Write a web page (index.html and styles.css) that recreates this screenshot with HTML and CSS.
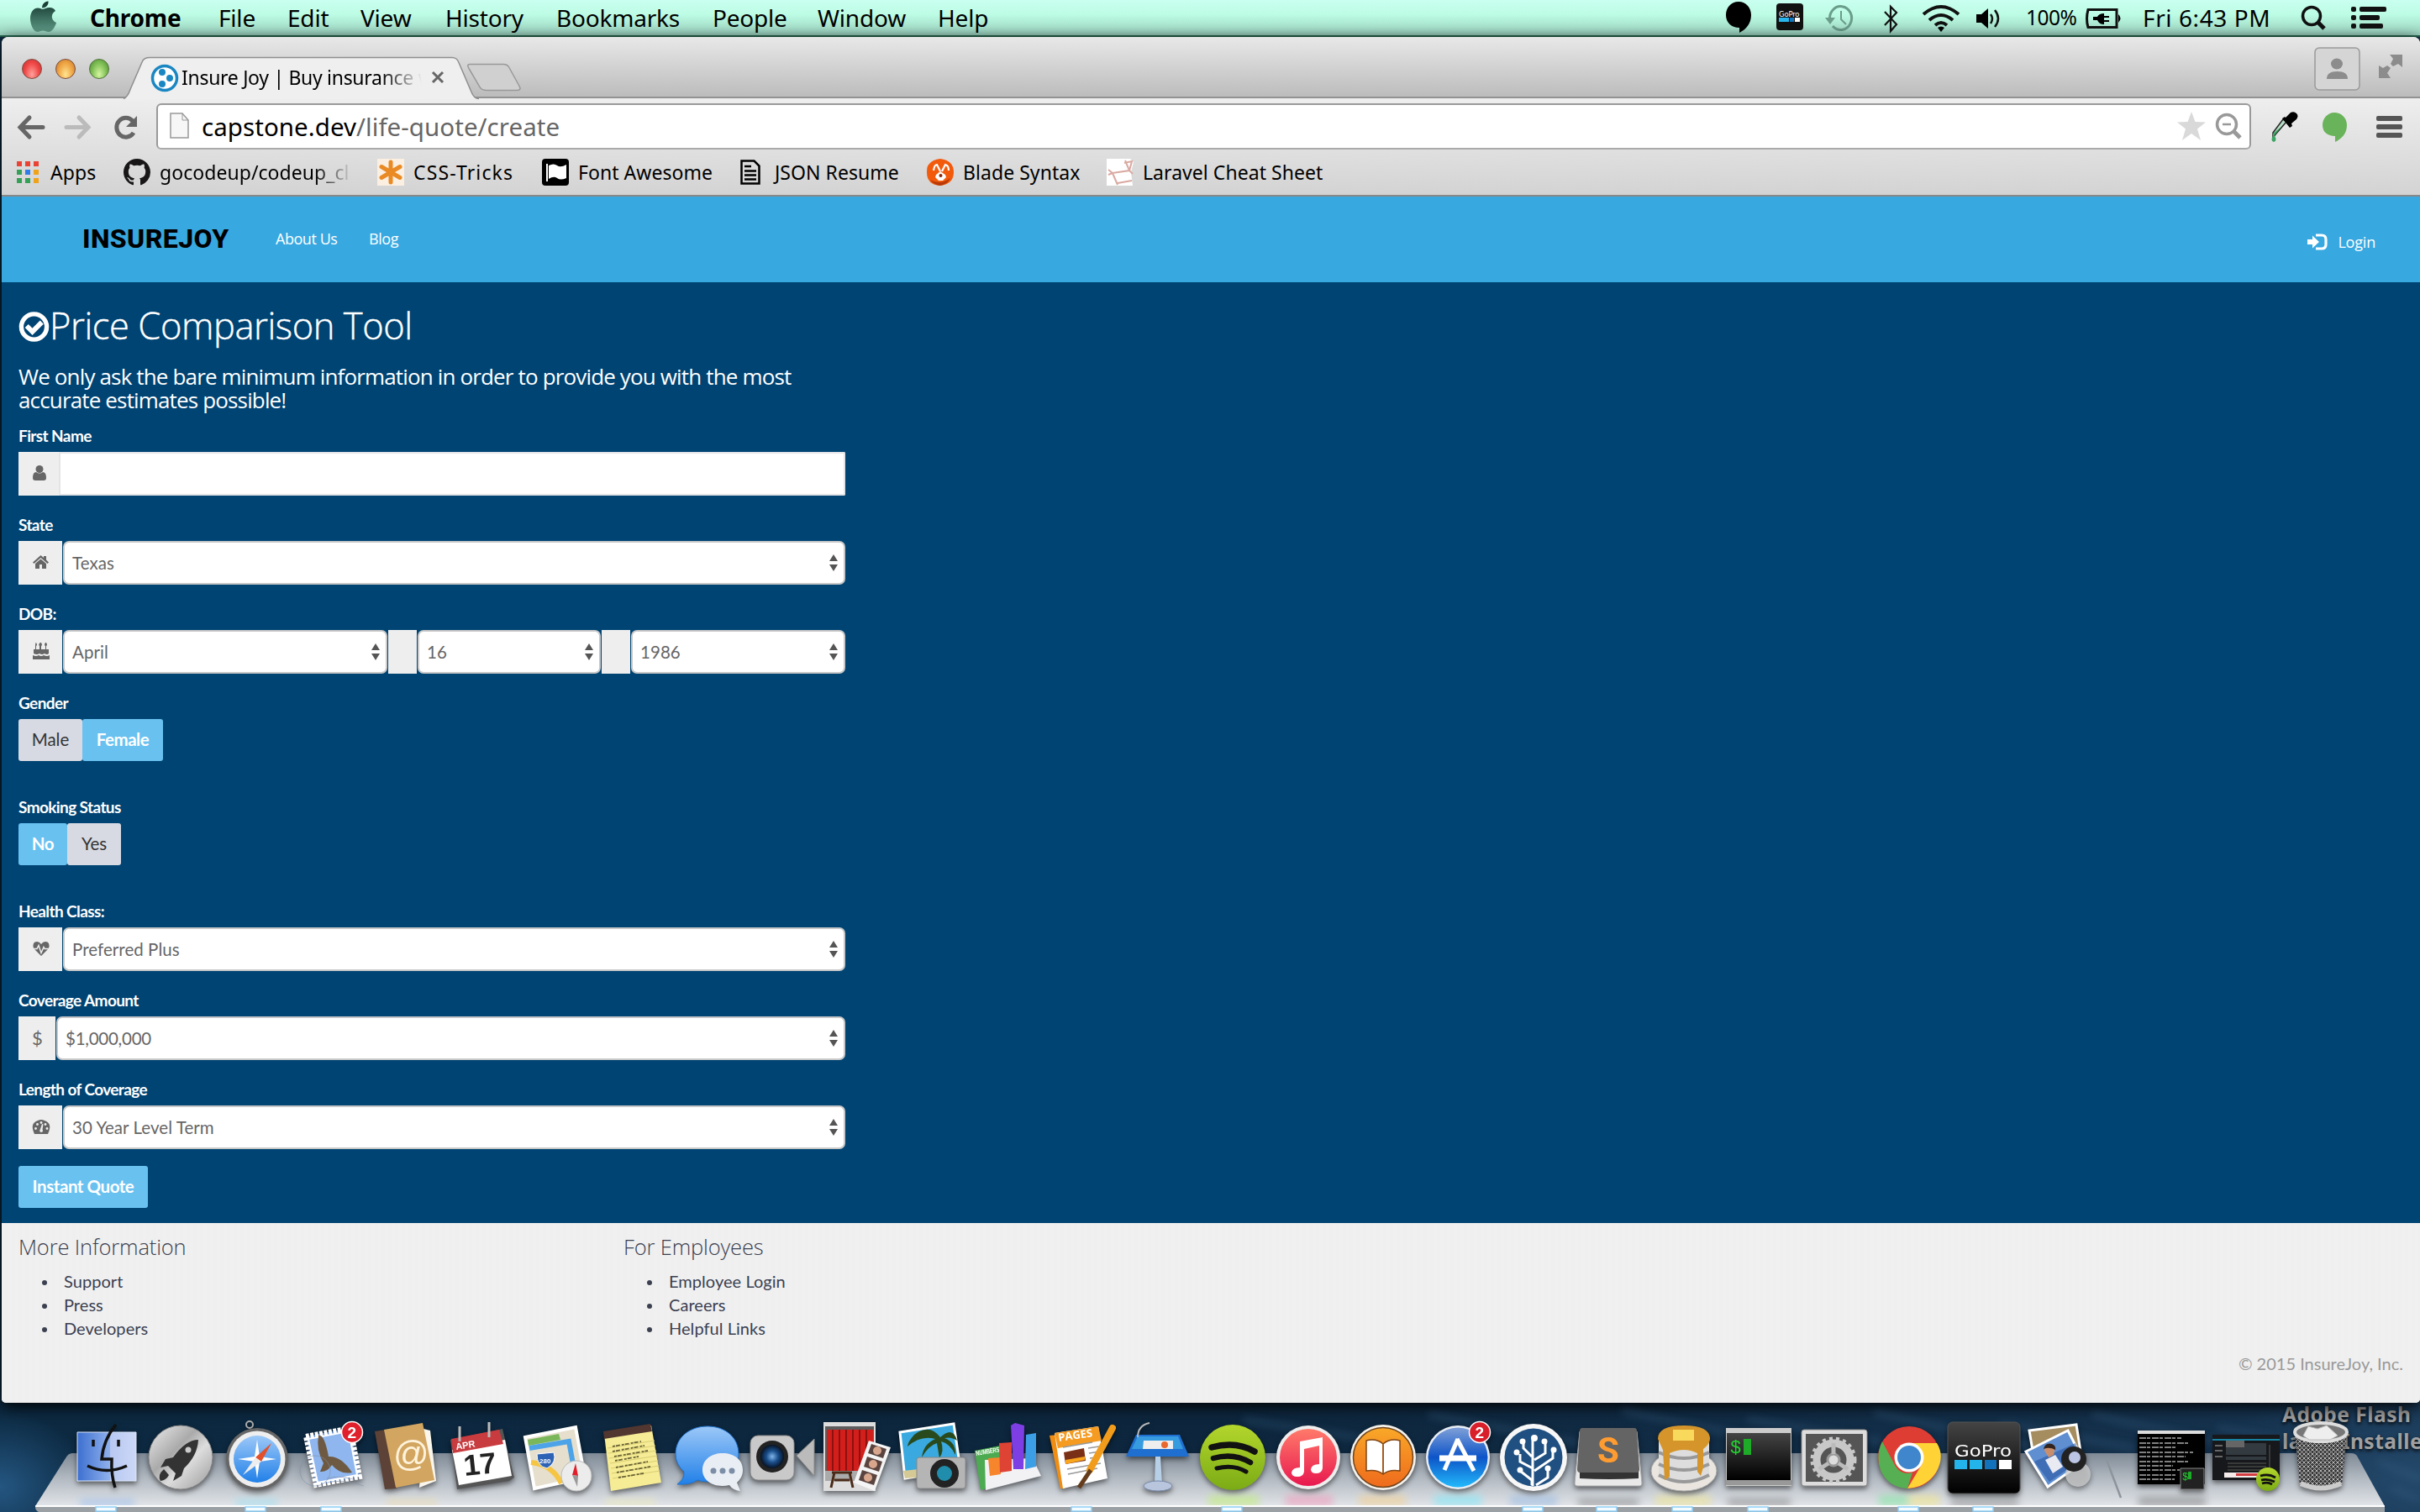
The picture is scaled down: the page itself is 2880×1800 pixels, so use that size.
FILE: index.html
```html
<!DOCTYPE html>
<html lang="en">
<head>
<meta charset="utf-8">
<title>Insure Joy | Buy insurance</title>
<link rel="stylesheet" href="styles.css">
</head>
<body>
<div class="desktop">
  <div class="desktop-label">Adobe Flash<br>layer Installer</div>

  <header class="menubar">
    <svg class="apple" viewBox="0 0 36 44" width="36" height="44"><defs><linearGradient id="ap" x2="0" y2="1"><stop offset="0" stop-color="#12352b"/><stop offset="1" stop-color="#5f9c88"/></linearGradient></defs><path fill="url(#ap)" d="M18 11c2-.2 4-2 8-2 3 0 6 1.600 7 4-6 3.500-5.500 11 1 14-1.500 5-5 11-9 11-3 0-4-1.500-7-1.500S14 38 11.500 38C7 38 3 29 3 22c0-8 4.500-12.500 9-12.500 3 0 4.500 1.500 6 1.500zM17 9.500C17 5 20 2 24.500 1.500 25 6 21.500 9.500 17 9.500z"/></svg>
    <b>Chrome</b><span>File</span><span>Edit</span><span>View</span><span>History</span><span>Bookmarks</span><span>People</span><span>Window</span><span>Help</span>
    <svg class="status" viewBox="2040 0 372 44" width="372" height="44">
      <path d="M2069 2c9 0 15 7 15 16 0 10-6 17-14 21v-6c-9 0-16-6-16-15s6-16 15-16z"/>
      <rect x="2114" y="4" width="32" height="32" rx="4" fill="#111"/><text x="2117" y="20" class="gopro-mini">GoPro</text><path fill="#29b6ef" d="M2117 21h12v5h-12z"/><path fill="#1477bd" d="M2130 21h5v5h-5z"/><path fill="#fff" d="M2136 21h6v5h-6z"/>
      <g fill="none" stroke="#6b9d8b" stroke-width="3"><path d="M2178 25a13 14 0 1 1 3 6"/><path d="M2191 13v10l6 6" stroke-width="2"/></g><path fill="#6b9d8b" d="M2172 21h12l-6 8z"/>
      <path fill="none" stroke="#111" stroke-width="2.200" d="M2243 14l14 15-7 8V8l7 7-14 15"/>
      <g fill="none" stroke="#111" stroke-width="4"><path d="M2289 17q21-18 42 0"/><path d="M2296 24q14-12 28 0"/><path d="M2303 30q7-6 14 0"/></g><path d="M2306 33q4-3 8 0l-4 5z"/>
      <path d="M2352 17h6l8-7v24l-8-7h-6z"/><path fill="none" stroke="#111" stroke-width="2.500" d="M2369 17q4 5 0 11M2374 12q8 10 0 20"/>
    </svg>
    <span class="percent">100%</span>
    <svg class="battery" viewBox="0 0 44 44" width="44" height="44"><path fill="none" stroke="#111" stroke-width="3" d="M4 11.500h34v21H4q-3-10 0-21z"/><path d="M40 17q5 4.500 0 10zM10 20h5q2-4 8-4v3h6v2h-6v3h6v2h-6v3q-6 0-8-5h-5z"/></svg>
    <span class="clock">Fri 6:43 PM</span>
    <svg viewBox="2730 0 120 44" width="120" height="44"><circle cx="2751" cy="19" r="10.500" fill="none" stroke="#111" stroke-width="3.500"/><path stroke="#111" stroke-width="5" d="M2758 26l8 8"/><g fill="#111"><rect x="2798" y="8" width="6" height="6" rx="2"/><rect x="2808" y="8" width="32" height="6" rx="2"/><rect x="2798" y="18" width="6" height="6" rx="2"/><rect x="2808" y="18" width="24" height="6" rx="2"/><rect x="2798" y="28" width="6" height="6" rx="2"/><rect x="2808" y="28" width="28" height="6" rx="2"/></g></svg>
  </header>

  <section class="window">
    <div class="tabstrip">
      <div class="lights"><i class="red"></i><i class="amber"></i><i class="green"></i></div>
      <div class="tab">
        <svg class="tab-shape" viewBox="0 0 484 50" width="484" height="50"><path fill="#efefef" stroke="#8e8e8e" stroke-width="1.500" d="M0 49.500q5-2 8-11L22 6q2-5.500 9-5.500h360q6 0 8 6l15 35q3 8 9 8"/><path fill="#d0d0d0" stroke="#999" stroke-width="1.500" d="M412 8.500h40q5 0 7 4l12 22q3 5-3 5h-36q-6 0-8-4l-13-22q-3-5 1-5z"/></svg>
        <svg class="favicon" viewBox="0 0 34 34" width="34" height="34"><circle cx="17" cy="17" r="14.500" fill="#fff" stroke="#1a87c2" stroke-width="3.500"/><g fill="#1a87c2"><circle cx="14" cy="10" r="4"/><circle cx="23" cy="17" r="4"/><circle cx="14" cy="24" r="4"/></g></svg>
        <span class="tab-title">Insure Joy | Buy insurance w</span>
        <svg class="tab-close" viewBox="0 0 16 16" width="16" height="16"><path stroke="#666" stroke-width="3" d="M2 2l12 12M14 2L2 14"/></svg>
      </div>
      <svg class="strip-icons" viewBox="2750 44 120 72" width="120" height="72"><rect x="2756" y="57" width="53" height="50" rx="5" fill="#d5d5d5" stroke="#999" stroke-width="1.500"/><ellipse cx="2782" cy="76" rx="7" ry="6.500" fill="#8c8c8c"/><path fill="#8c8c8c" d="M2770 94q0-9 12.500-9t12.500 9zM2845 65h15v15l-5-4-6 3-3-3 3-6zM2832 78l5 3 5-3 4 3-4 6 4 6h-14z"/></svg>
    </div>

    <div class="toolbar">
      <svg viewBox="0 117 185 64" width="185" height="64" fill="none" stroke-width="5"><path stroke="#666" stroke-linecap="round" d="M24 151.500h27M35 140l-11 11.500L35 163"/><path stroke="#bbb" stroke-linecap="round" d="M79 151.500h26M94 140l11 11.500L94 163"/><path stroke="#666" stroke-width="5" d="M159 158a11 11.500 0 1 1-1-14"/><path fill="#666" d="M163 138v13h-13z"/></svg>
      <div class="omnibox">
        <svg viewBox="0 0 24 32" width="24" height="32"><path fill="#f7f7f7" stroke="#999" stroke-width="1.500" d="M1 1h14l7 8v21H1z"/><path fill="none" stroke="#999" d="M15 1v8h7"/></svg>
        <span class="url">capstone.dev<em>/life-quote/create</em></span>
        <svg viewBox="2590 124 84 54" width="84" height="54"><path fill="#d9d9d9" d="M2609 134l4.500 12 12.500.5-10 8 4 13.500-11-8-11 8 4-13.500-10-8 12.500-.5z"/><circle cx="2651" cy="149" r="11.500" fill="none" stroke="#999" stroke-width="3.500"/><path stroke="#999" stroke-width="2.500" d="M2646 149h10"/><path stroke="#999" stroke-width="5" d="M2659 157l8 8"/></svg>
      </div>
      <svg viewBox="2690 117 180 64" width="180" height="64"><path fill="#b7dcc4" stroke="#222" stroke-width="1.500" d="M2722 145l-13 15-3 4 0-6 12-16z"/><path fill="#3ca563" d="M2716 151l-8 10-2 4v-6zM2707 160q5 8 0 9-5-1 0-9z"/><path d="M2717 141l3-2 1 1 6-6q4-2 7 1t0 7l-6 5 1 3-3 2z"/><path fill="#69b35a" d="M2779 134c8 0 15 6 15 15 0 10-6 16-14 20v-7c-9 0-15-5-15-13s6-15 14-15z"/><g fill="#555"><rect x="2829" y="138" width="31" height="6" rx="2"/><rect x="2829" y="148" width="31" height="6" rx="2"/><rect x="2829" y="158" width="31" height="6" rx="2"/></g></svg>
    </div>

    <nav class="bookmarks">
      <a class="apps"><svg viewBox="0 0 26 26" width="26" height="26"><path fill="#ea4335" d="M0 0h6v6H0zM10 0h6v6h-6zM20 0h6v6h-6z"/><path fill="#34a058" d="M0 10h6v6H0zM0 20h6v6H0zM10 20h6v6h-6z"/><path fill="#2f7de9" d="M10 10h6v6h-6z"/><path fill="#f0a21b" d="M20 10h6v6h-6zM20 20h6v6h-6z"/></svg>Apps</a>
      <a><svg viewBox="0 0 16 16" width="32" height="32"><path fill="#181616" d="M8 0C3.580 0 0 3.580 0 8c0 3.540 2.290 6.530 5.470 7.590.4.070.55-.17.55-.38 0-.19-.01-.82-.01-1.490-2.010.37-2.530-.49-2.690-.94-.09-.23-.48-.94-.82-1.130-.28-.15-.68-.52-.01-.53.63-.01 1.080.58 1.230.82.720 1.210 1.870.87 2.330.66.070-.52.28-.87.51-1.070-1.780-.2-3.640-.89-3.640-3.950 0-.87.31-1.590.82-2.150-.08-.2-.36-1.020.08-2.120 0 0 .67-.21 2.200.82.640-.18 1.320-.27 2-.27s1.360.09 2 .27c1.530-1.040 2.200-.82 2.200-.82.440 1.100.160 1.920.080 2.120.51.560.82 1.270.82 2.150 0 3.070-1.870 3.750-3.650 3.950.29.250.54.730.54 1.480 0 1.070-.01 1.930-.01 2.200 0 .21.150.46.550.38A8.010 8.010 0 0 0 16 8c0-4.420-3.580-8-8-8z"/></svg><span class="faded">gocodeup/codeup_cl</span></a>
      <a class="tricks"><svg viewBox="0 0 32 32" width="32" height="32"><path fill="#fbefe2" d="M0 0h32v32H0z"/><path stroke="#e98a24" stroke-width="5" stroke-linecap="round" d="M16 4v24M5 9.500l22 13M27 9.500l-22 13"/></svg>CSS-Tricks</a>
      <a><svg viewBox="0 0 32 32" width="32" height="32"><rect width="32" height="32" rx="4"/><path fill="#fff" d="M8 8q6-3 10 0t11-1v16q-7 3-11 0t-10 1z"/><path stroke="#fff" stroke-width="2" d="M6 6v21"/></svg>Font Awesome</a>
      <a class="json"><svg viewBox="0 0 24 30" width="24" height="30"><path fill="none" stroke="#000" stroke-width="2.500" d="M1.500 1.500h15l6 6v21h-21zM5 8h8M5 13.500h14M5 18.500h14M5 23.500h14"/></svg>JSON Resume</a>
      <a><svg viewBox="0 0 32 32" width="32" height="32"><path fill="#f25a0c" d="M3 6q4-5 13-6 16 2 16 16T16 32Q0 31 0 16 0 8 3 6z"/><path fill="#b93a08" d="M4 25q12 7 24-2-4 8-12 9-8-1-12-7z"/><path fill="none" stroke="#fff" stroke-width="2.200" d="M8 14q1-7 4-7l4 8M18 15l4-8q4 1 4 7"/><path fill="#fff" d="M11 19l5-4 6 4 1 3-4 4h-5l-4-4z"/><circle cx="16.500" cy="20" r="2" fill="#8a2807"/></svg>Blade Syntax</a>
      <a><svg viewBox="0 0 32 32" width="32" height="32"><path fill="#fff" d="M0 0h28l4 4-3 12 2 16H0z"/><path fill="none" stroke="#d9a9a1" stroke-width="2" d="M2 13l5 4 20-3 3-11-9 2M7 17l6 14M2 19l5-2M13 29l17-3M22 2l5 12 4 4"/></svg>Laravel Cheat Sheet</a>
    </nav>

    <div class="site-nav">
      <span class="brand">INSUREJOY</span><a class="about">About Us</a><a>Blog</a>
      <a class="login"><svg viewBox="0 0 24 20" width="24" height="20"><path fill="none" stroke="#fff" stroke-width="3.200" d="M10 2h7q5 0 5 5v6q0 5-5 5h-7"/><path fill="#fff" d="M0 7h6V2.500L14 10l-8 7.500V13H0z"/></svg>Login</a>
    </div>

    <main class="quote">
      <h1><svg viewBox="0 0 38 38" width="37" height="38"><circle cx="19" cy="19" r="15.500" fill="none" stroke="#fff" stroke-width="5.500"/><path fill="none" stroke="#fff" stroke-width="6" d="M10 18l7 7 11.500-11.500"/></svg>Price Comparison Tool</h1>
      <p class="lead">We only ask the bare minimum information in order to provide you with the most<br>accurate estimates possible!</p>

      <div class="group"><label>First Name</label><div class="row"><span class="addon narrow"><svg viewBox="0 0 16 18" width="16" height="18"><circle cx="8" cy="4.500" r="4.500"/><path d="M0 15q0-7 4-7 4 3 8 0 4 0 4 7 0 3-3 3H3q-3 0-3-3z"/></svg></span><span class="input"></span></div></div>
      <div class="group"><label>State</label><div class="row"><span class="addon"><svg viewBox="0 0 19 16" width="19" height="16"><path d="M9.500 0L13 3V1h3v4.500l3 3-1.500 1.500-8-7-8 7L0 8.500zM3 10l6.500-5.500L16 10v6h-5v-5H8v5H3z"/></svg></span><span class="select">Texas</span></div></div>
      <div class="group"><label>DOB:</label><div class="row dob"><span class="addon"><svg viewBox="0 0 20 20" width="20" height="20"><path d="M3 3q0-3 1-3 2 3 0 4v4h4V4Q6 2 9 0h1q2 3 0 4v4h5V4q-2-1 0-4h1q2 3 0 4v4h3v5q-2 2-5 0-3 2-6 0-3 2-7 0V8h2zM0 15q4 2 7 0 3 2 6 0 4 2 7 0v5H0z"/></svg></span><span class="select">April</span><span class="addon"></span><span class="select">16</span><span class="addon"></span><span class="select">1986</span></div></div>
      <div class="group choice"><label>Gender</label><div class="buttons"><span class="btn male">Male</span><span class="btn active female">Female</span></div></div>
      <div class="group choice"><label>Smoking Status</label><div class="buttons"><span class="btn active no">No</span><span class="btn yes">Yes</span></div></div>
      <div class="group"><label>Health Class:</label><div class="row"><span class="addon"><svg viewBox="0 0 20 17" width="20" height="17"><path d="M10 17L1 8Q-1 0 5 0q3 0 5 3 2-3 5-3 6 0 4 8z"/><path fill="none" stroke="#eee" stroke-width="1.500" d="M0 8.500h5l2-4 3 9 3-7 1 2h6"/></svg></span><span class="select">Preferred Plus</span></div></div>
      <div class="group"><label>Coverage Amount</label><div class="row"><span class="addon dollar">$</span><span class="select amount">$1,000,000</span></div></div>
      <div class="group last"><label>Length of Coverage</label><div class="row"><span class="addon"><svg viewBox="0 0 20 17" width="20" height="17"><path d="M2 17Q-4 4 6 1q4-2 8 0 10 3 4 16z"/><g fill="#eee"><circle cx="3.500" cy="10.500" r="1.400"/><circle cx="5.500" cy="5.500" r="1.400"/><circle cx="10" cy="3.500" r="1.400"/><circle cx="15" cy="5.500" r="1.400"/><circle cx="17" cy="10.500" r="1.400"/><path d="M11 5l1.500.5-1 6q1.500 3-1.500 3.500-3-1-1-4z"/></g></svg></span><span class="select">30 Year Level Term</span></div></div>
      <span class="btn active submit">Instant Quote</span>
    </main>

    <footer class="site-footer">
      <div class="links"><h4>More Information</h4><ul><li>Support</li><li>Press</li><li>Developers</li></ul></div>
      <div class="links"><h4>For Employees</h4><ul><li>Employee Login</li><li>Careers</li><li>Helpful Links</li></ul></div>
      <span class="copyright">© 2015 InsureJoy, Inc.</span>
    </footer>
  </section>

  <div class="dock">
    <svg class="shelf" viewBox="0 1670 2880 130" width="2880" height="130">
      <defs>
        <linearGradient id="shelf" x2="0" y2="1"><stop offset="0" stop-color="#7f8a96"/><stop offset=".5" stop-color="#b4bbc3"/><stop offset="1" stop-color="#e2e5e9"/></linearGradient>
        <linearGradient id="steel" x2="1" y2="1"><stop offset="0" stop-color="#eee"/><stop offset=".4" stop-color="#aaa"/><stop offset=".6" stop-color="#ddd"/><stop offset="1" stop-color="#999"/></linearGradient>
        <linearGradient id="blue" x2="0" y2="1"><stop offset="0" stop-color="#9cc8f8"/><stop offset="1" stop-color="#2180e8"/></linearGradient>
        <linearGradient id="finder" x2="1" y2="0"><stop offset="0" stop-color="#3c6fd0"/><stop offset=".55" stop-color="#8fb0ec"/><stop offset=".56" stop-color="#b7c8f2"/><stop offset="1" stop-color="#cdd8f6"/></linearGradient>
        <linearGradient id="store" x2="0" y2="1"><stop offset="0" stop-color="#7fa0d8"/><stop offset=".5" stop-color="#0d54c8"/><stop offset="1" stop-color="#22b9fb"/></linearGradient>
        <linearGradient id="tunes" x2="0" y2="1"><stop offset="0" stop-color="#ff7a6a"/><stop offset="1" stop-color="#e8184f"/></linearGradient>
        <linearGradient id="dark" x2="0" y2="1"><stop offset="0" stop-color="#444"/><stop offset="1" stop-color="#000"/></linearGradient>
        <linearGradient id="orange" x2="0" y2="1"><stop offset="0" stop-color="#f9a828"/><stop offset="1" stop-color="#ef6a1c"/></linearGradient>
        <linearGradient id="spot" x2="0" y2="1"><stop offset="0" stop-color="#b3d62c"/><stop offset="1" stop-color="#7bab15"/></linearGradient>
        <radialGradient id="lens"><stop offset="0" stop-color="#7fb5e8"/><stop offset=".5" stop-color="#1a4f8c"/><stop offset="1" stop-color="#071325"/></radialGradient>
        <filter id="soft" x="-50%" y="-100%" width="200%" height="300%"><feGaussianBlur stdDeviation="5"/></filter>
      </defs>
      <g filter="url(#soft)" fill="none" stroke="#3a6286" stroke-width="5" opacity=".45"><path d="M1480 1690l150 24M1700 1684l180 34M1930 1680l200 40M2080 1690l160 26M2230 1682l190 40M2380 1694l160 30M2490 1684l180 40M2640 1700l120 22M2830 1740l50 20M2846 1772l34 14"/></g>
      <path fill="url(#shelf)" d="M86 1730h2712q6 0 8 5l32 58H42l36-57q3-6 8-6z"/>
      <g filter="url(#soft)" opacity=".55"><path fill="#89b4ee" d="M95 1785h65v8H95z"/><path fill="#8adff5" d="M280 1785h50v8h-50z"/><path fill="#efd9a0" d="M460 1785h60v8h-60z"/><path fill="#f4efb0" d="M720 1785h60v8h-60z"/><path fill="#bdf06a" d="M1438 1780h60v13h-60z"/><path fill="#f492b5" d="M1530 1780h56v13h-56z"/><path fill="#f7cf87" d="M1617 1780h56v13h-56z"/><path fill="#75eafc" d="M1707 1780h56v13h-56z"/><path fill="#94b8e3" d="M1797 1780h56v13h-56z"/><path fill="#777" d="M1878 1784h72v9h-72zM2056 1784h75v9h-75zM2322 1784h80v9h-80zM2545 1782h80v11h-80z"/><path fill="#f2e68a" d="M1970 1780h66v13h-66z"/><path fill="#78e69a" d="M2236 1780h36v13h-36z"/><path fill="#f7e87e" d="M2272 1780h36v13h-36z"/></g>
      <path fill="#9ba0a5" d="M42 1794h2796v6H46q-4-2-4-6z"/><path fill="#fff" d="M42 1792h2796v2H42z"/>
      <path stroke="#8d949b" stroke-width="2.500" d="M2507 1738l17 45"/>
      <g fill="#f4fcff" stroke="#8dcdf5" stroke-width="1.500"><path d="M114 1794h24v5h-24zM292 1794h24v5h-24zM382 1794h24v5h-24zM1275 1794h24v5h-24zM1454 1794h24v5h-24zM1812 1794h24v5h-24zM1900 1794h24v5h-24zM1990 1794h24v5h-24zM2080 1794h24v5h-24zM2259 1794h24v5h-24zM2348 1794h24v5h-24z"/></g>
    </svg>
    <div class="icons">
      <svg viewBox="-45 0 90 100"><path fill="url(#finder)" stroke="#dce7fb" d="M-35 9h70v58h-70z"/><path fill="none" stroke="#111" stroke-width="3.500" d="M11 0Q-4 18-6 41H6Q5 60 10 75M-23 49Q0 60 24 49M-16 18v8M14 18v8"/></svg>
      <svg viewBox="-45 0 90 100"><circle cx="-1" cy="39" r="38" fill="url(#steel)" stroke="#888"/><path fill="#333" d="M20 18Q5 18-10 39l-9 2-6 10 9-2 9 9-3 9 10-6 3-9Q19 37 20 18zM-21 53q-8 7-4 14 7-1 10-7z"/><circle cx="8" cy="30" r="3.500" fill="#ccc"/></svg>
      <svg viewBox="-45 0 90 100"><circle cx="-9" cy="0" r="4" fill="none" stroke="#aaa" stroke-width="2"/><circle cy="41" r="37" fill="#666"/><circle cy="41" r="33.500" fill="#eee"/><circle cy="41" r="28" fill="url(#blue)"/><path fill="#fff" d="M0 18l3 20 20 3-20 3-3 20-3-20-20-3 20-3z"/><path fill="#e2512b" d="M17 22L5 44l-7-5z"/><path fill="#eee" d="M-17 60L5 44l-7-5z"/></svg>
      <svg viewBox="-45 0 90 100"><path fill="#5682c8" stroke="#fff" stroke-width="6" stroke-dasharray="4 1.500" d="M-31 14L22 4l11 58-52 10z"/><path fill="#8fb6ee" stroke="#fff" stroke-width="2" d="M-28 17L20 8l10 52-47 9z"/><path fill="#6e5a42" d="M-16 13q7-2 12 25 15-1 28 19-14 3-24-9-6 9-14 8l4-10q-9-16-6-33z"/><circle cx="-20" cy="55" r="18" fill="none" stroke="#8090a8" opacity=".6"/><path fill="none" stroke="#8090a8" opacity=".6" d="M-6 64q18-5 40 4M-6 69q18-5 44 4"/><circle cx="24" cy="9" r="12.500" fill="#e0202c" stroke="#fff" stroke-width="1.500"/><text x="18.500" y="16" class="badge">2</text></svg>
      <svg viewBox="-45 0 90 100"><path fill="#faf6ec" d="M20 5l8 2 7 60-20 8z"/><path fill="#5c4237" d="M-38 8l12-2 14 70-14 1z"/><path fill="#d2a661" d="M-27 6L19-2 33 66l-46 9z"/><text x="-16" y="49" class="at">@</text></svg>
      <svg viewBox="-45 0 90 100"><path fill="#555" d="M-38 18L24 5l14 58-6 4-62 10z"/><path fill="#fff" d="M-36 30L27 18l8 43-63 11z"/><path fill="#c83b3f" d="M-37 17L20 6l5 17-60 11z"/><path stroke="#bbb" stroke-width="3" d="M-27 2v18M8-3v18"/><text x="-31" y="30" class="apr" transform="rotate(-9 -31 30)">APR</text><text x="-21" y="61" class="day" transform="rotate(-6 -21 61)">17</text></svg>
      <svg viewBox="-45 0 90 100"><path fill="#e6dfcd" stroke="#fff" stroke-width="4" d="M-38 15L22 3l11 60-60 13z"/><path fill="#79b75a" d="M-35 18L2 11l2 7-38 7z"/><path fill="none" stroke="#4da3e8" stroke-width="6" d="M-33 28L14 20l6 32"/><path fill="none" stroke="#f6c543" stroke-width="6" d="M-31 45q26 3 36 25"/><path fill="#2d62b5" stroke="#fff" d="M-24 35l20-2q4 12-8 19-12-2-12-17z"/><text x="-21" y="46" class="tiny">280</text><circle cx="23" cy="61" r="18" fill="#ececec" stroke="#bbb"/><path fill="#e01e2a" d="M22 46l-4 14 7 1z"/><path fill="#999" d="M24 74l-6-14 7 1z"/></svg>
      <svg viewBox="-45 0 90 100"><path fill="#f6ec95" d="M-34 11L22 1l12 68-60 10z"/><path fill="#523630" d="M-35 8L21-1l2 9-57 9z"/><path stroke="#d9cd73" fill="none" d="M-30 28l56-9M-29 34l56-9M-28 40l56-9M-27 46l56-9M-26 52l56-9M-25 58l56-9M-24 64l56-9"/><path stroke="#6a6436" stroke-width="1.800" stroke-dasharray="3 1 5 2" fill="none" d="M-24 26l34-6M-24 32l38-7M-22 38l40-7M-21 43l28-5M-20 51l38-7M-19 57l40-7M-17 63l30-5"/></svg>
      <svg viewBox="-45 0 90 100"><path fill="url(#blue)" stroke="#2173cf" d="M0 2c21 0 37 13 37 33S21 68 0 68q-6 0-12-2-8 6-24 5 9-6 8-15-10-9-10-21C-38 15-21 2 0 2z"/><path fill="#e9eef5" d="M18 34c14 0 24 8 24 20 0 7-3 11-7 15l4 10q-9-1-13-7C8 76-6 67-6 54c0-12 10-20 24-20z"/><g fill="#7b8ea5"><circle cx="7" cy="55" r="3.500"/><circle cx="18" cy="55" r="3.500"/><circle cx="29" cy="55" r="3.500"/></g></svg>
      <svg viewBox="-45 0 90 100"><rect x="-38" y="13" width="52" height="53" rx="9" fill="#c9c9c9" stroke="#888"/><circle cx="-12" cy="38" r="19" fill="#222"/><circle cx="-12" cy="38" r="14" fill="url(#lens)"/><path fill="#bbb" stroke="#888" d="M17 37l21-20v44z"/></svg>
      <svg viewBox="-45 0 90 100"><path fill="#ddd" d="M-41-3h62v82h-62z"/><path fill="#5c5c5c" d="M-39 2h58v56h-58z"/><path fill="#aaa" d="M-39 55h58v12h-58z"/><path fill="#d21f1c" d="M-37 6H18v49h-55z"/><path stroke="#8e100f" stroke-width="2" d="M-30 6v49M-22 6v49M-14 6v49M-6 6v49M2 6v49M10 6v49"/><path stroke="#4a2a17" stroke-width="3" fill="none" d="M-31 57h24M-28 57l-4 18M-10 57l4 18M-28 66h18"/><path fill="#f5f5f5" d="M13 19l26 8-19 52-25-10z"/><path fill="#5a443f" d="M16 23l18 6-4 11-18-6zM11 38l18 6-4 12-18-6zM5 54l18 6-4 12-18-6z"/><g fill="#d8a68d"><circle cx="23" cy="31" r="5"/><circle cx="18" cy="47" r="5"/><circle cx="12" cy="63" r="5"/></g></svg>
      <svg viewBox="-45 0 90 100"><path fill="#39a9df" stroke="#fff" stroke-width="3" d="M-39 9L25-1l8 54-66 11z"/><path fill="#d5c996" d="M-35 55l36-4v10l-34 3z"/><path fill="#294a1c" d="M9 15Q-4-2-22 12q-8 9-8 14Q-14 12 3 17q-14 6-16 22 8-14 18-17l3 18q6-9 2-20 10 2 17 16 1-15-13-20 8-2 15 3Q24 1 9 15z"/><rect x="-19" y="39" width="58" height="37" rx="3" fill="#b5b5b5" stroke="#888"/><circle cx="14" cy="58" r="17" fill="#222"/><circle cx="14" cy="58" r="9" fill="#208dac"/></svg>
      <svg viewBox="-45 0 90 100"><path fill="#4cab51" d="M-39 31l35-7 12 42-40 12z"/><path fill="#f2f2f5" d="M-27 42l57-2 10 21-66 17z"/><text x="-37" y="37" class="tiny" transform="rotate(-10 -37 37)" textLength="28" lengthAdjust="spacingAndGlyphs">NUMBERS</text><path fill="#f7852c" d="M-23 40l14-1 1 20-13 2z"/><path fill="#de4334" d="M-10 22l15-1v34l-14 2z"/><path fill="#7d3fe4" d="M4 1l5-3 11 3-1 52H7z"/><path fill="#3c9fe6" d="M22 12l12-2v40l-13 3z"/></svg>
      <svg viewBox="-45 0 90 100"><path fill="#f08e13" d="M-40 13l10-1 9 64h-6z"/><path fill="#fff" d="M-34 10L18 2l11 62-53 12z"/><path fill="#f59b22" d="M-34 10L18 2l4 17-52 9z"/><text x="-29" y="20" class="pages" transform="rotate(-8 -29 20)">PAGES</text><path fill="#7a3016" d="M-23 33l24-5 2 15-24 4z"/><path fill="#f9a51d" d="M-21 42l23-4v4l-23 5z"/><path stroke="#999" stroke-width="1.500" d="M-24 27l35-6M6 28l13-2M7 34l13-2M8 40l13-2M-19 53l40-7M-18 59l35-7"/><path stroke="#f29c1b" stroke-width="8" stroke-linecap="round" d="M35 4L8 54"/><path stroke="#643c1c" stroke-width="5" d="M9 54L-5 75"/></svg>
      <svg viewBox="-45 0 90 100"><path fill="#1f6fd0" d="M-26 12h52l11 26h-75z"/><path fill="#46b9e9" d="M-24 14h48l6 15h-61z" opacity=".6"/><path fill="#eee" d="M-17 19h35v10h-36z"/><circle cx="8" cy="24" r="4" fill="#e9682e"/><path fill="#b8cfe8" d="M-3 38h6l2 32h-9z"/><ellipse cy="73" rx="17" ry="6" fill="#b8c5dc" stroke="#7788a8"/><path fill="none" stroke="#bbb" stroke-width="2" d="M-24 15q0-14 14-17"/></svg>
      <svg viewBox="-45 0 90 100"><circle cy="39" r="39" fill="url(#spot)"/><g fill="none" stroke="#111" stroke-linecap="round"><path stroke-width="7.500" d="M-25 27q29-8 51 5"/><path stroke-width="6.500" d="M-23 40q24-7 44 5"/><path stroke-width="5" d="M-19 52q20-5 35 4"/></g></svg>
      <svg viewBox="-45 0 90 100"><circle cy="39" r="38" fill="#eee"/><circle cy="39" r="34" fill="url(#tunes)"/><path fill="#fff" d="M-10 20l27-5v37q-1 6-8 6-6 0-6-5 1-6 10-6V25l-18 4v27q-1 6-8 6-7 0-7-5 1-6 10-6z"/></svg>
      <svg viewBox="-45 0 90 100"><circle cy="39" r="39" fill="#f5f2ec"/><circle cy="39" r="35.500" fill="url(#orange)" stroke="#70451e" stroke-width="1.500"/><path fill="#fff" stroke="#834513" stroke-width="1.500" d="M-20 19q12-3 20 4 8-7 20-4v36q-13-2-20 4-7-6-20-4z"/><path stroke="#a35b20" d="M0 23v35" stroke-width="2"/></svg>
      <svg viewBox="-45 0 90 100"><circle cy="39" r="38" fill="#e9eef5"/><circle cy="39" r="35.500" fill="url(#store)"/><g fill="none" stroke="#fff"><path stroke-width="7" d="M-22 40h44"/><path stroke-width="5" d="M0 17l-16 37M-1 17l20 38"/></g><circle cx="26" cy="9" r="12.500" fill="#d81f2a" stroke="#fff" stroke-width="1.500"/><text x="20.500" y="16" class="badge">2</text></svg>
      <svg viewBox="-45 0 90 100"><circle cy="39" r="40" fill="#f7f7f7"/><circle cy="39" r="34.500" fill="#205081"/><g fill="none" stroke="#fff" stroke-width="3"><path d="M-1 73V18M-1 52l-15-8V35M-2 38l-10-10v-8M1 42l13-8V21M1 55l22-15V30M-2 72V66l-14-11M3 72l14-9v-9"/></g><g fill="#fff"><circle cx="1" cy="16" r="4"/><circle cx="-13" cy="20" r="3.500"/><circle cx="-20" cy="33" r="3.500"/><circle cx="13" cy="20" r="3.500"/><circle cx="24" cy="30" r="3.500"/><circle cx="-16" cy="54" r="3.500"/><circle cx="17" cy="52" r="3.500"/></g></svg>
      <svg viewBox="-45 0 90 100"><path fill="#e9e9e9" stroke="#aaa" d="M-34 8h68l6 62q0 3-3 3h-74q-3 0-3-3z"/><path fill="#333" d="M-34 54h70v10q-35 2-70 0z"/><path fill="#646464" d="M-31 4h62q3 0 3 4l3 45q0 4-3 4h-68q-3 0-3-4l3-45q0-4 3-4z"/><text x="-13" y="45" class="sublime">S</text></svg>
      <svg viewBox="-45 0 90 100"><ellipse cy="55" rx="39" ry="24" fill="#eae6df" stroke="#aaa"/><path fill="#ddd" d="M-30 15h60v46q-30 18-60 0z"/><path fill="none" stroke="#999" stroke-width="4" d="M-30 33q30 14 60 0M-30 47q30 14 60 0M-30 60q30 16 60 0"/><path fill="#d5952a" d="M-31 17q0-16 31-16t31 16q0 6-8 12v22l-3 10-4-5V34Q0 26-17 34v28l-6 4-2-36z"/><path fill="#f9d95c" d="M-13 6h25v13h-25z"/></svg>
      <svg viewBox="-45 0 90 100"><path fill="#ccc" d="M-39 4h78v69h-78z"/><path fill="url(#dark)" d="M-38 10h76v56h-76z"/><path fill="#999" d="M-39 66h78v6h-78z"/><text x="-34" y="34" class="term">$</text><path fill="#1eac28" d="M-18 17h9v19h-9z"/></svg>
      <svg viewBox="-45 0 90 100"><rect x="-38" y="6" width="78" height="67" rx="3" fill="#ddd" stroke="#888"/><path fill="#555" d="M-33 11h68v57h-68z"/><circle cy="42" r="20" fill="none" stroke="#c8c8c8" stroke-width="9"/><circle cy="42" r="25" fill="none" stroke="#c8c8c8" stroke-width="5" stroke-dasharray="4 4"/><circle cy="42" r="7" fill="#ddd" stroke="#999" stroke-width="3"/><path stroke="#bbb" stroke-width="5" d="M0 35V22M6 46l11 7M-6 46l-11 7"/></svg>
      <svg viewBox="-45 0 90 100"><circle cy="39" r="37" fill="#de3d34"/><path fill="#ffd335" d="M0 22h33Q43 38 32 57 20 75-2 76l18-30z"/><path fill="#56b053" d="M-32 20l16 30q8 11 20 7l-6 19q-23-1-32-22-6-17 2-34z"/><circle cy="39" r="17.500" fill="#fff"/><circle cy="39" r="14" fill="#3f86cc"/></svg>
      <svg viewBox="-45 0 90 100"><rect x="-43" y="-3" width="86" height="85" rx="6" fill="url(#dark)" stroke="#555"/><text x="-35" y="38" class="gopro" textLength="68" lengthAdjust="spacingAndGlyphs">GoPro</text><path fill="#24b4ec" d="M-35 42h15v11h-15zM-17 42H-2v11h-15z"/><path fill="#1272bc" d="M1 42h14v11H1z"/><path fill="#fff" d="M18 42h15v11H18z"/></svg>
      <svg viewBox="-45 0 90 100"><path fill="#a58d60" stroke="#fff" stroke-width="3" d="M-35 7L21 0l6 38-55 11z"/><path fill="#5f8fd0" stroke="#fff" stroke-width="3" d="M-39 32L11 7l19 37-43 30z"/><path fill="#2c58a5" d="M-29 44L20 22l7 20-38 26z" opacity=".6"/><path fill="#c98f6d" d="M-17 31q0-8 8-7 6 3 3 12l-6 3z"/><path fill="#e9eaf2" d="M-16 42l12-6 9 14-12 8z"/><path fill="#33231d" d="M-18 29q2-8 10-6 5 2 4 7-7-4-14-1z"/><circle cx="23" cy="59" r="15" fill="#ccc" opacity=".8"/><circle cx="18" cy="41" r="15" fill="#222"/><circle cx="19" cy="39" r="7" fill="#bcc5e3"/></svg>
    </div>
    <div class="icons minimized">
      <svg viewBox="-45 0 90 100"><path d="M-40 7h80v64h-80z"/><path fill="#ddd" d="M-40 7h80v4h-80z"/><path stroke="#aaa" stroke-width="1.500" stroke-dasharray="8 1 4 2" d="M-38 16h50M-38 22h58M-38 27h45M-38 33h64M-38 38h55M-38 44h60M-38 49h40M-38 54h48M-38 60h45M-38 65h42"/><path fill="#222" stroke="#888" d="M11 52h28v25H11z"/><text x="13" y="66" class="term-mini">$</text><path fill="#1eac28" d="M20 56h4v9h-4z"/></svg>
      <svg viewBox="-45 0 90 100"><path fill="#16181b" d="M-40 12h80v54h-80z"/><path fill="#1683a3" d="M-40 17h80v2h-80z"/><path fill="#333a40" d="M-24 22h48v14h-48zM-24 38h48v4h-48z"/><path fill="#666" d="M-24 19h22v8h-22zM-37 24h9v2h-9zM-37 30h9v2h-9zM-37 37h9v2h-9z"/><path stroke="#444" stroke-width="1.500" d="M-22 46h46M-22 50h46M-22 54h46M28 24v36"/><path fill="#f4eaea" d="M-26 57h50v6h-50z"/><path fill="#d43b40" d="M-12 58h28v3h-28z"/><circle cx="26" cy="65" r="14" fill="url(#spot)"/><path fill="none" stroke="#111" stroke-width="2.800" d="M17 61q10-3 18 2M18 66q8-2 16 2M19 70q7-2 12 1"/></svg>
      <svg viewBox="-45 0 90 100"><defs><pattern id="mesh" width="5" height="5" patternUnits="userSpaceOnUse"><path fill="#3a3a3a" d="M0 0h5v5H0z"/><path stroke="#b5b5b5" d="M0 0l5 5M5 0L0 5"/></pattern></defs><path fill="url(#mesh)" d="M-31 8q31 22 62 0l-6 64q-25 10-50 0z"/><ellipse cx="0" cy="9" rx="31" ry="11" fill="#777" stroke="#ddd" stroke-width="4"/><path fill="#eee" stroke="#bbb" d="M-21 13l6-11 11 3 11-4 13 12-9 5h-25z"/><path fill="none" stroke="#ccc" stroke-width="6" d="M-24 70q24 11 48 0"/></svg>
    </div>
  </div>
</div>
</body>
</html>
```
FILE: styles.css
```css
* { box-sizing: border-box; }
body { margin: 0; width: 2880px; height: 1800px; overflow: hidden; font-family: "Noto Sans", "Open Sans", sans-serif; }
svg { display: block; flex: none; overflow: visible; }

.desktop { position: relative; width: 2880px; height: 1800px; overflow: hidden; display: flex; flex-direction: column; background: radial-gradient(ellipse 110px 90px at 0 1770px, #245681, transparent), radial-gradient(ellipse 260px 120px at 2880px 1760px, #24496b, transparent), linear-gradient(90deg, #0c2941 0, #0d263d 50%, #16334f 100%); }
.desktop-label { position: absolute; left: 2716px; top: 1668px; font-size: 24.500px; line-height: 32px; font-weight: 700; letter-spacing: .5px; color: #a0a0a0; white-space: nowrap; text-shadow: 0 2px 4px #000; z-index: 0; }

.menubar { height: 44px; flex: none; display: grid; grid-template-columns: 75px 153px 82px 87px 101px 132px 186px 125px 143px 923px 372px 69px 70px 179px 120px; padding-left: 33px; font-size: 28px; letter-spacing: -.2px; line-height: 42px; white-space: nowrap; color: #000; border-bottom: 2px solid #23674f; background: linear-gradient(#c9fff0, #bdfce5 40%, #9bd3bf); }
.menubar > b, .menubar > span { margin-left: -1px; }
.percent { font-size: 24.500px; letter-spacing: -.5px; }
.clock { letter-spacing: .6px; }

.window { position: relative; z-index: 1; margin-left: 2px; height: 1626px; flex: none; display: flex; flex-direction: column; border-radius: 8px 8px 5px 5px; overflow: hidden; box-shadow: 0 4px 18px #000; background: #efefef; }
.tabstrip { height: 73px; flex: none; display: flex; align-items: flex-start; background: linear-gradient(#e8e8e8, #bcbcbc); border-bottom: 2px solid #929292; }
.lights { display: flex; gap: 16px; padding: 26px 0 0 24px; width: 145px; }
.lights i { width: 24px; height: 24px; border-radius: 50%; border: 1.500px solid #7b4b3f; }
.lights .red { background: radial-gradient(ellipse at 50% 80%, #ffa29c, #ef4746 55%, #c22d30); }
.lights .amber { background: radial-gradient(ellipse at 50% 80%, #ffe490, #efa443 55%, #bd7427); }
.lights .green { background: radial-gradient(ellipse at 50% 80%, #d5f6a0, #7fbf55 55%, #4b8533); border-color: #4d7338; }
.tab { position: relative; width: 484px; height: 50px; margin-top: 24px; display: flex; align-items: center; }
.tab-shape { position: absolute; left: 0; top: 0; }
.favicon { position: relative; margin-left: 32px; }
.tab-title { position: relative; margin: -3px 0 0 3px; width: 289px; overflow: hidden; white-space: nowrap; font-size: 23px; letter-spacing: -.3px; color: #000; -webkit-mask-image: linear-gradient(90deg, #000 82%, transparent 99%); mask-image: linear-gradient(90deg, #000 82%, transparent 99%); }
.tab-close { position: relative; margin: -2px 0 0 8px; }
.strip-icons { margin-left: auto; margin-right: 11px; }

.toolbar { height: 64px; flex: none; display: flex; align-items: center; background: linear-gradient(#eeeeee, #dfdfdf); }
.toolbar > svg:first-child { margin-left: -2px; }
.omnibox { margin: 2px 10px 0 1px; width: 2493px; height: 55px; display: flex; align-items: center; padding: 0 4px 0 14px; background: #fff; border: 2px solid #999; border-bottom-color: #aaa; border-radius: 6px; }
.url { margin-left: 14px; font-size: 29.500px; letter-spacing: .05px; flex: 1; color: #000; }
.url em { font-style: normal; color: #666; }

.bookmarks { height: 53px; flex: none; display: grid; grid-template-columns: 129px 302px 196px 236px 222px 214px auto; padding-left: 16px; background: linear-gradient(#dfdfdf, #d3d3d3); border-bottom: 2px solid #888; font-size: 23px; letter-spacing: .05px; color: #000; white-space: nowrap; }
.bookmarks a { display: flex; align-items: center; gap: 11px; height: 47px; }
.bookmarks .apps { padding-left: 2px; gap: 14px; }
.bookmarks .json { gap: 17px; }
.bookmarks .tricks { letter-spacing: 1.150px; }
.faded { width: 230px; overflow: hidden; -webkit-mask-image: linear-gradient(90deg, #000 80%, transparent); mask-image: linear-gradient(90deg, #000 80%, transparent); }

.site-nav { height: 102px; flex: none; display: flex; align-items: center; padding: 0 53px 3px 96px; background: #37a8e0; color: #fff; font: 18px "Open Sans", sans-serif; letter-spacing: -.45px; }
.brand { width: 230px; color: #000; font: 800 32px Roboto, sans-serif; letter-spacing: .4px; }
.about { width: 111px; }
.login { margin-left: auto; display: flex; align-items: center; gap: 12px; padding-top: 8px; letter-spacing: -.2px; }

.quote { height: 1120px; flex: none; padding: 22px 20px 0; background: #004473; color: #fff; }
.quote h1 { margin: 0 0 16px; display: flex; align-items: center; font: 300 43.500px/60px "Open Sans", sans-serif; letter-spacing: -.45px; -webkit-text-stroke: .4px #fff; }
.quote h1 svg { margin-top: 2px; }
.lead { margin: 0 0 14px; font: 400 26px/28px "Open Sans", sans-serif; letter-spacing: -.85px; }
.group { width: 984px; margin-bottom: 20px; font-family: Lato, sans-serif; }
.group label { display: block; height: 34px; font-size: 19px; line-height: 29px; font-weight: 700; letter-spacing: -.6px; }
.row { display: flex; height: 52px; }
.addon { flex: none; width: 52px; margin-right: 1px; display: flex; align-items: center; justify-content: center; background: #eee; color: #666; font-size: 22px; }
.addon svg { fill: #666; margin: 0 0 2px 1px; }
.addon.narrow { width: 50px; margin: 0; border-right: 2px solid #e3e4e8; }
.addon.dollar { width: 44px; padding: 0 0 2px 1px; }
.input { flex: 1; background: #fff; border: 2px solid #e3e4e8; border-left: 0; border-radius: 0 2px 2px 0; }
.select { position: relative; flex: 1; padding-left: 9px; background: #fff; border: 2px solid #c8c8c8; border-radius: 7px; color: #666; font-size: 20.500px; line-height: 48px; letter-spacing: .05px; }
.select.amount { letter-spacing: -.25px; }
.select::before, .select::after { content: ""; position: absolute; right: 7px; border: 5px solid transparent; }
.select::before { top: 9px; border-bottom: 8px solid #555; }
.select::after { top: 26px; border-top: 8px solid #555; }
.dob .select:nth-child(2) { flex: none; width: 386px; }
.dob .select:nth-child(4) { flex: none; width: 218px; }
.dob .addon:nth-child(n+3) { width: 34px; margin: 0 1px; }
.choice { margin-bottom: 40px; }
.buttons { display: flex; height: 50px; }
.btn { display: block; height: 50px; border-radius: 3px; background: #d7dae2; color: #333; font: 20.500px/48px Lato, sans-serif; text-align: center; }
.btn.active { background: #69c1f0; color: #fff; font-weight: 700; letter-spacing: -.45px; }
.male { width: 76px; }
.female { width: 96px; }
.no { width: 58px; }
.yes { width: 64px; }
.submit { width: 154px; }

.site-footer { flex: 1; display: flex; padding: 0 20px; background: repeating-linear-gradient(90deg, #f0f0f0 0 4px, #efefef 4px 8px); color: #3b4050; font: 20px/28px Lato, sans-serif; letter-spacing: .05px; }
.links { width: 720px; }
.links h4 { margin: 11px 0 14px; font: 300 25.500px/34px "Open Sans", sans-serif; letter-spacing: -.15px; }
.links ul { margin: -4px 0 0; padding-left: 27px; list-style: none; }
.links li { display: flex; align-items: center; }
.links li::before { content: ""; width: 6px; height: 6px; margin: 3px 20px 0 1px; border-radius: 50%; background: #3b4050; }
.copyright { margin-left: auto; align-self: flex-end; margin-bottom: 33px; color: #999; letter-spacing: 0; }

.dock { position: relative; z-index: 1; flex: none; height: 130px; display: flex; align-items: flex-start; padding: 26px 0 0 82px; margin-bottom: 0; }
.shelf { position: absolute; left: 0; top: 0; }
.icons { position: relative; display: flex; }
.icons svg { width: 90px; height: 100px; margin-right: -.65px; filter: drop-shadow(0 3px 3px #0008); }
.minimized { margin-left: 44px; }
.badge { font: 700 19px "Liberation Sans", sans-serif; fill: #fff; }
.at { font: 42px "Liberation Sans", sans-serif; fill: #fff3dd; }
.apr { font: 700 11px "Liberation Sans", sans-serif; fill: #fff; }
.day { font: 700 35px "Liberation Sans", sans-serif; fill: #222; }
.tiny { font: 700 8px "Liberation Sans", sans-serif; fill: #fff; }
.pages { font: 700 13px "Open Sans", sans-serif; fill: #fff; }
.sublime { font: 700 42px Roboto, sans-serif; fill: #ff9c31; }
.term { font: 22px "Liberation Mono", monospace; fill: #24d330; }
.term-mini { font: 12px "Liberation Mono", monospace; fill: #24d330; }
.gopro { font: 19px "DejaVu Sans", sans-serif; fill: #fff; }
.gopro-mini { font: 8.500px "DejaVu Sans", sans-serif; fill: #fff; }
```
